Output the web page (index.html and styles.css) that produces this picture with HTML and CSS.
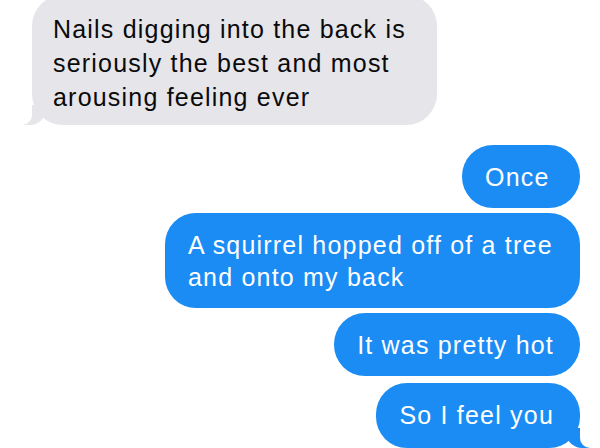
FILE: index.html
```html
<!DOCTYPE html>
<html lang="en">

<head>
    <meta charset="UTF-8">
    <meta name="viewport" content="width=device-width, initial-scale=1.0">
    <title>Messages</title>
    <link rel="stylesheet" href="styles.css">
</head>

<body>
    <div class="thread">
        <div class="bubble them">Nails digging into the back is seriously the best and most arousing feeling ever</div>
        <div class="bubble me first">Once</div>
        <div class="bubble me">A squirrel hopped off of a tree and onto my back</div>
        <div class="bubble me">It was pretty hot</div>
        <div class="bubble me last">So I feel you</div>
    </div>
</body>

</html>
```

FILE: styles.css
```css
html,
body {
    margin: 0;
    padding: 0;
    background: #fff;
}

.thread {
    display: flex;
    flex-direction: column;
    gap: 5px;
    height: 448px;
    overflow: hidden;
    padding: 0 20px 0 32px;
    box-sizing: border-box;
    font-family: "Liberation Sans", Arial, sans-serif;
    font-size: 25px;
    letter-spacing: 1.2px;
}

.bubble {
    position: relative;
    line-height: 32px;
    border-radius: 31px;
    padding: 16px 26px 15px 23px;
}

/* grey, incoming */
.them {
    align-self: flex-start;
    max-width: 405px;
    box-sizing: border-box;
    margin-top: -5px;
    padding: 17px 20px 11px 21px;
    line-height: 34px;
    background: #e5e5ea;
    color: #0a0a0a;
}

.them::before {
    content: "";
    position: absolute;
    bottom: 0;
    left: -8px;
    width: 22px;
    height: 20px;
    background: #e5e5ea;
    border-bottom-right-radius: 16px;
}

.them::after {
    content: "";
    position: absolute;
    bottom: 0;
    left: -11px;
    width: 11px;
    height: 21px;
    background: #fff;
    border-bottom-right-radius: 10px;
}

/* blue, outgoing */
.me {
    align-self: flex-end;
    max-width: 415px;
    box-sizing: border-box;
    background: #1b8cf4;
    color: #fff;
}

.me.first {
    margin-top: 15px;
    min-width: 118px;
}

.me.last {
    margin-top: 2px;
    padding-bottom: 17px;
}

.me.last::before {
    content: "";
    position: absolute;
    bottom: 0;
    right: -10px;
    width: 24px;
    height: 20px;
    background: #1b8cf4;
    border-bottom-left-radius: 16px;
}

.me.last::after {
    content: "";
    position: absolute;
    bottom: 0;
    right: -14px;
    width: 14px;
    height: 21px;
    background: #fff;
    border-bottom-left-radius: 10px;
}
```
